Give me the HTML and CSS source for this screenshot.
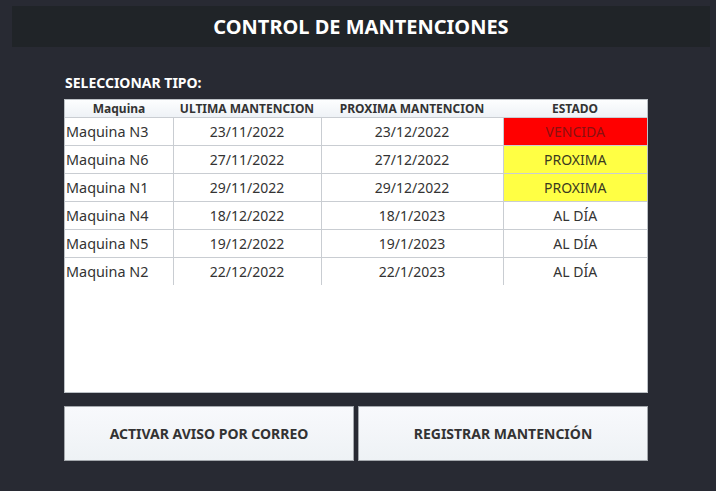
FILE: index.html
```html
<!DOCTYPE html>
<html lang="es">
<head>
<meta charset="utf-8">
<title>Control de Mantenciones</title>
<link rel="stylesheet" href="styles.css">
</head>
<body>
<header class="topbar"><h1 class="title">CONTROL DE MANTENCIONES</h1></header>
<main class="content">
  <div class="label">SELECCIONAR TIPO:</div>
  <div class="grid-box">
    <table class="grid">
      <colgroup><col class="c1"><col class="c2"><col class="c3"><col class="c4"></colgroup>
      <thead>
        <tr><th>Maquina</th><th>ULTIMA MANTENCION</th><th>PROXIMA MANTENCION</th><th>ESTADO</th></tr>
      </thead>
      <tbody>
        <tr><td class="name">Maquina N3</td><td>23/11/2022</td><td>23/12/2022</td><td class="st vencida">VENCIDA</td></tr>
        <tr><td class="name">Maquina N6</td><td>27/11/2022</td><td>27/12/2022</td><td class="st proxima">PROXIMA</td></tr>
        <tr><td class="name">Maquina N1</td><td>29/11/2022</td><td>29/12/2022</td><td class="st proxima">PROXIMA</td></tr>
        <tr><td class="name">Maquina N4</td><td>18/12/2022</td><td>18/1/2023</td><td class="st">AL DÍA</td></tr>
        <tr><td class="name">Maquina N5</td><td>19/12/2022</td><td>19/1/2023</td><td class="st">AL DÍA</td></tr>
        <tr><td class="name">Maquina N2</td><td>22/12/2022</td><td>22/1/2023</td><td class="st">AL DÍA</td></tr>
      </tbody>
    </table>
  </div>
  <div class="actions">
    <button class="btn" type="button">ACTIVAR AVISO POR CORREO</button>
    <button class="btn" type="button">REGISTRAR MANTENCIÓN</button>
  </div>
</main>
</body>
</html>
```
FILE: styles.css
```css
html, body {
  margin: 0;
  padding: 0;
  background: #282a33;
  font-family: "Noto Sans", "Open Sans", sans-serif;
  color: #333;
}
.topbar {
  margin: 6px 6px 0 12px;
  height: 41px;
  background: #202428;
  display: flex;
  align-items: center;
  justify-content: center;
}
.title {
  margin: 0;
  font-size: 20px;
  font-weight: 700;
  color: #ffffff;
}
.content {
  padding: 0 68px 0 64px;
}
.label {
  margin-top: 26px;
  padding-left: 1px;
  height: 26px;
  line-height: 20px;
  font-size: 14px;
  font-weight: 700;
  color: #ffffff;
}
.grid-box {
  width: 582px;
  height: 292px;
  background: #ffffff;
  border: 1px solid #bcc1c6;
}
.grid {
  width: 100%;
  border-collapse: collapse;
  table-layout: fixed;
  border-style: hidden;
}
.c1 { width: 108px; }
.c2 { width: 148px; }
.c3 { width: 182px; }
.grid th {
  height: 17px;
  padding: 0;
  font-size: 12px;
  font-weight: 700;
  color: #333;
  background: linear-gradient(#fdfeff, #eef2f6);
  border-bottom: 1px solid #c9cdd2;
  text-align: center;
  line-height: 17px;
}
.grid td {
  height: 27px;
  padding: 0;
  font-size: 14px;
  text-align: center;
  border: 1px solid #c9cdd2;
  color: #333;
}
.grid td.name {
  text-align: left;
  padding-left: 1px;
  font-size: 14.4px;
}
.grid td.vencida {
  background: #ff0000;
  color: #8a1010;
}
.grid td.proxima {
  background: #ffff44;
  color: #3a3a20;
}
.actions {
  margin-top: 13px;
  display: flex;
  gap: 4px;
  width: 584px;
}
.btn {
  flex: 1;
  height: 55px;
  border: 1px solid #a4a8ad;
  background: linear-gradient(#f8f9fc, #eef2f5);
  font-family: "Noto Sans", "Open Sans", sans-serif;
  font-size: 14px;
  font-weight: 700;
  color: #333;
  padding: 0;
}
```
